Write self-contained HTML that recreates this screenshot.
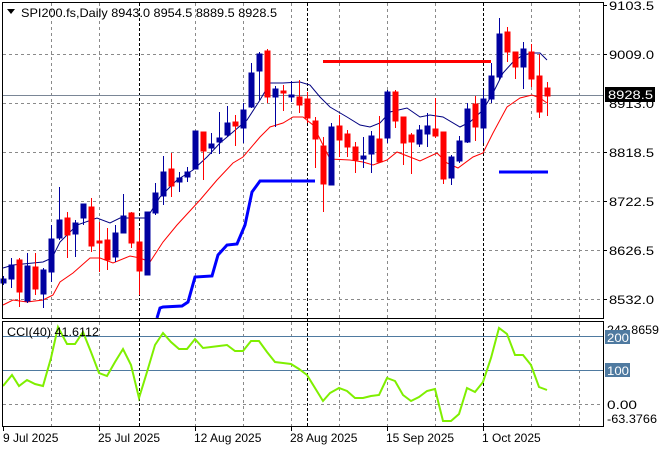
<!DOCTYPE html>
<html><head><meta charset="utf-8"><style>
html,body{margin:0;padding:0;background:#fff;}
svg{display:block;font-family:"Liberation Sans",sans-serif;}
</style></head><body>
<svg width="660" height="450" viewBox="0 0 660 450" xmlns="http://www.w3.org/2000/svg">
<rect width="660" height="450" fill="#fff"/>
<g stroke="#8a8a8a" stroke-width="1" stroke-dasharray="3,3">
<line x1="3" y1="54.5" x2="603" y2="54.5"/><line x1="3" y1="103.5" x2="603" y2="103.5"/><line x1="3" y1="152.5" x2="603" y2="152.5"/><line x1="3" y1="201.5" x2="603" y2="201.5"/><line x1="3" y1="250.5" x2="603" y2="250.5"/><line x1="3" y1="299.5" x2="603" y2="299.5"/>
<line x1="3" y1="404.5" x2="603" y2="404.5"/>
<line x1="51.5" y1="3" x2="51.5" y2="318"/><line x1="99.5" y1="3" x2="99.5" y2="318"/><line x1="195.5" y1="3" x2="195.5" y2="318"/><line x1="243.5" y1="3" x2="243.5" y2="318"/><line x1="291.5" y1="3" x2="291.5" y2="318"/><line x1="339.5" y1="3" x2="339.5" y2="318"/><line x1="387.5" y1="3" x2="387.5" y2="318"/><line x1="435.5" y1="3" x2="435.5" y2="318"/><line x1="531.5" y1="3" x2="531.5" y2="318"/><line x1="579.5" y1="3" x2="579.5" y2="318"/>
<line x1="51.5" y1="322" x2="51.5" y2="426"/><line x1="99.5" y1="322" x2="99.5" y2="426"/><line x1="195.5" y1="322" x2="195.5" y2="426"/><line x1="243.5" y1="322" x2="243.5" y2="426"/><line x1="291.5" y1="322" x2="291.5" y2="426"/><line x1="339.5" y1="322" x2="339.5" y2="426"/><line x1="387.5" y1="322" x2="387.5" y2="426"/><line x1="435.5" y1="322" x2="435.5" y2="426"/><line x1="531.5" y1="322" x2="531.5" y2="426"/><line x1="579.5" y1="322" x2="579.5" y2="426"/>
</g>
<g stroke="#000" stroke-width="1" stroke-dasharray="3,2">
<line x1="139.5" y1="3" x2="139.5" y2="426"/><line x1="307.5" y1="3" x2="307.5" y2="426"/><line x1="483.5" y1="3" x2="483.5" y2="426"/>
</g>
<line x1="3" y1="95.5" x2="603" y2="95.5" stroke="#7a8696" stroke-width="1"/>
<line x1="3" y1="336.5" x2="603" y2="336.5" stroke="#4f7aa0" stroke-width="1"/>
<line x1="3" y1="370.5" x2="603" y2="370.5" stroke="#4f7aa0" stroke-width="1"/>

<polyline fill="none" stroke="#ff0000" stroke-width="1" points="3,305 13,300 27,302 43,300 53,295 60,282 73,273 90,258 100,258 113,263 130,256 140,258 150,262 163,242 177,225 200,200 217,180 233,163 243,157 260,137 270,127 283,123 293,117 303,117 313,125 323,145 330,159 350,160 363,162 373,165 387,160 397,152 410,157 420,161 437,153 447,163 458,168 473,157 483,153 493,133 507,107 520,98 532,95 540,98 547,103"/>
<polyline fill="none" stroke="#000080" stroke-width="1" points="3,268 13,265 33,263 43,262 52,258 60,242 77,225 97,218 110,223 120,218 133,218 147,218 160,197 177,180 193,170 207,157 220,143 233,132 247,120 260,100 270,83 283,83 300,82 310,85 320,97 330,107 347,117 360,125 370,127 380,123 390,112 407,108 420,117 430,115 443,117 460,127 470,122 483,110 493,93 503,73 513,62 523,55 533,53 540,53 547,60"/>
<polyline fill="none" stroke="#0000ff" stroke-width="3" points="157,318 160,308 163,307 182,306 188,302 195,277 212,276 218,255 227,245 237,244 245,225 252,192 260,181 315,181"/>
<line x1="323" y1="61.5" x2="491" y2="61.5" stroke="#ff0000" stroke-width="3"/>
<line x1="499" y1="172" x2="548" y2="172" stroke="#0000ff" stroke-width="3"/>

<g>
<g stroke="#0000a0" fill="#0000a0">
<line x1="3.5" y1="276" x2="3.5" y2="285"/><rect x="1" y="279" width="5" height="4"/>
<line x1="11.5" y1="258" x2="11.5" y2="288"/><rect x="9" y="265" width="5" height="14"/>
<line x1="27.5" y1="253" x2="27.5" y2="303"/><rect x="25" y="266" width="5" height="35"/>
<line x1="43.5" y1="268" x2="43.5" y2="308"/><rect x="41" y="270" width="5" height="24"/>
<line x1="51.5" y1="225" x2="51.5" y2="282"/><rect x="49" y="239" width="5" height="33"/>
<line x1="59.5" y1="187" x2="59.5" y2="240"/><rect x="57" y="220" width="5" height="18"/>
<line x1="75.5" y1="220" x2="75.5" y2="257"/><rect x="73" y="223" width="5" height="11"/>
<line x1="83.5" y1="204" x2="83.5" y2="225"/><rect x="81" y="204" width="5" height="14"/>
<line x1="115.5" y1="225" x2="115.5" y2="262"/><rect x="113" y="233" width="5" height="24"/>
<line x1="123.5" y1="194" x2="123.5" y2="233"/><rect x="121" y="216" width="5" height="17"/>
<line x1="147.5" y1="212" x2="147.5" y2="275"/><rect x="145" y="212" width="5" height="63"/>
<line x1="155.5" y1="183" x2="155.5" y2="215"/><rect x="153" y="193" width="5" height="20"/>
<line x1="163.5" y1="156" x2="163.5" y2="205"/><rect x="161" y="172" width="5" height="24"/>
<line x1="179.5" y1="172" x2="179.5" y2="192"/><rect x="177" y="178" width="5" height="4"/>
<line x1="187.5" y1="167" x2="187.5" y2="182"/><rect x="185" y="172" width="5" height="5"/>
<line x1="195.5" y1="131" x2="195.5" y2="169"/><rect x="193" y="131" width="5" height="38"/>
<line x1="211.5" y1="133" x2="211.5" y2="154"/><rect x="209" y="144" width="5" height="4"/>
<line x1="219.5" y1="112" x2="219.5" y2="154"/><rect x="217" y="138" width="5" height="4"/>
<line x1="227.5" y1="106" x2="227.5" y2="137"/><rect x="225" y="123" width="5" height="12"/>
<line x1="243.5" y1="103" x2="243.5" y2="143"/><rect x="241" y="110" width="5" height="18"/>
<line x1="251.5" y1="63" x2="251.5" y2="108"/><rect x="249" y="73" width="5" height="34"/>
<line x1="259.5" y1="52" x2="259.5" y2="100"/><rect x="257" y="54" width="5" height="17"/>
<line x1="275.5" y1="86" x2="275.5" y2="127"/><rect x="273" y="89" width="5" height="8"/>
<line x1="291.5" y1="81" x2="291.5" y2="102"/><rect x="289" y="95" width="5" height="2"/>
<line x1="331.5" y1="123" x2="331.5" y2="185"/><rect x="329" y="127" width="5" height="58"/>
<line x1="363.5" y1="137" x2="363.5" y2="168"/><rect x="361" y="156" width="5" height="3"/>
<line x1="371.5" y1="131" x2="371.5" y2="173"/><rect x="369" y="136" width="5" height="18"/>
<line x1="387.5" y1="90" x2="387.5" y2="143"/><rect x="385" y="92" width="5" height="46"/>
<line x1="419.5" y1="125" x2="419.5" y2="147"/><rect x="417" y="130" width="5" height="14"/>
<line x1="427.5" y1="113" x2="427.5" y2="147"/><rect x="425" y="126" width="5" height="8"/>
<line x1="451.5" y1="155" x2="451.5" y2="185"/><rect x="449" y="157" width="5" height="21"/>
<line x1="459.5" y1="136" x2="459.5" y2="163"/><rect x="457" y="141" width="5" height="20"/>
<line x1="467.5" y1="103" x2="467.5" y2="143"/><rect x="465" y="109" width="5" height="33"/>
<line x1="483.5" y1="90" x2="483.5" y2="143"/><rect x="481" y="99" width="5" height="29"/>
<line x1="491.5" y1="63" x2="491.5" y2="103"/><rect x="489" y="76" width="5" height="23"/>
<line x1="499.5" y1="18" x2="499.5" y2="80"/><rect x="497" y="34" width="5" height="43"/>
<line x1="523.5" y1="42" x2="523.5" y2="89"/><rect x="521" y="49" width="5" height="18"/>
</g>
<g stroke="#ff0000" fill="#ff0000">
<line x1="19.5" y1="258" x2="19.5" y2="307"/><rect x="17" y="260" width="5" height="32"/>
<line x1="35.5" y1="253" x2="35.5" y2="295"/><rect x="33" y="267" width="5" height="22"/>
<line x1="67.5" y1="212" x2="67.5" y2="258"/><rect x="65" y="218" width="5" height="17"/>
<line x1="91.5" y1="198" x2="91.5" y2="252"/><rect x="89" y="207" width="5" height="39"/>
<line x1="99.5" y1="222" x2="99.5" y2="272"/><rect x="97" y="241" width="5" height="2"/>
<line x1="107.5" y1="228" x2="107.5" y2="270"/><rect x="105" y="240" width="5" height="20"/>
<line x1="131.5" y1="212" x2="131.5" y2="248"/><rect x="129" y="213" width="5" height="30"/>
<line x1="139.5" y1="230" x2="139.5" y2="295"/><rect x="137" y="242" width="5" height="29"/>
<line x1="171.5" y1="153" x2="171.5" y2="197"/><rect x="169" y="169" width="5" height="17"/>
<line x1="203.5" y1="132" x2="203.5" y2="180"/><rect x="201" y="132" width="5" height="19"/>
<line x1="235.5" y1="115" x2="235.5" y2="146"/><rect x="233" y="122" width="5" height="4"/>
<line x1="267.5" y1="49" x2="267.5" y2="103"/><rect x="265" y="51" width="5" height="46"/>
<line x1="283.5" y1="85" x2="283.5" y2="111"/><rect x="281" y="91" width="5" height="2"/>
<line x1="299.5" y1="80" x2="299.5" y2="113"/><rect x="297" y="97" width="5" height="8"/>
<line x1="307.5" y1="92" x2="307.5" y2="123"/><rect x="305" y="99" width="5" height="19"/>
<line x1="315.5" y1="117" x2="315.5" y2="168"/><rect x="313" y="121" width="5" height="18"/>
<line x1="323.5" y1="137" x2="323.5" y2="212"/><rect x="321" y="146" width="5" height="38"/>
<line x1="339.5" y1="115" x2="339.5" y2="157"/><rect x="337" y="126" width="5" height="14"/>
<line x1="347.5" y1="130" x2="347.5" y2="157"/><rect x="345" y="134" width="5" height="13"/>
<line x1="355.5" y1="142" x2="355.5" y2="173"/><rect x="353" y="147" width="5" height="13"/>
<line x1="379.5" y1="116" x2="379.5" y2="162"/><rect x="377" y="139" width="5" height="23"/>
<line x1="395.5" y1="90" x2="395.5" y2="128"/><rect x="393" y="92" width="5" height="29"/>
<line x1="403.5" y1="117" x2="403.5" y2="165"/><rect x="401" y="117" width="5" height="26"/>
<line x1="411.5" y1="133" x2="411.5" y2="174"/><rect x="409" y="135" width="5" height="7"/>
<line x1="435.5" y1="98" x2="435.5" y2="138"/><rect x="433" y="129" width="5" height="7"/>
<line x1="443.5" y1="132" x2="443.5" y2="184"/><rect x="441" y="132" width="5" height="47"/>
<line x1="475.5" y1="96" x2="475.5" y2="141"/><rect x="473" y="104" width="5" height="23"/>
<line x1="507.5" y1="27" x2="507.5" y2="62"/><rect x="505" y="32" width="5" height="20"/>
<line x1="515.5" y1="52" x2="515.5" y2="79"/><rect x="513" y="52" width="5" height="15"/>
<line x1="531.5" y1="44" x2="531.5" y2="87"/><rect x="529" y="52" width="5" height="27"/>
<line x1="539.5" y1="54" x2="539.5" y2="118"/><rect x="537" y="76" width="5" height="36"/>
<line x1="547.5" y1="82" x2="547.5" y2="116"/><rect x="545" y="88" width="5" height="8"/>
</g>
</g>

<polyline fill="none" stroke="#7fef00" stroke-width="2" points="3,386 12,375 19,386 27,380 35,384 43,386 51,358 58,327 67,344 75,344 83,332 91,352 99,373 107,376 115,362 123,349 131,365 139,398 147,372 155,345 163,333 171,342 179,349 187,349 195,339 203,348 211,347 219,346 227,345 235,351 243,351 251,341 259,341 267,352 275,362 283,363 291,364 299,369 307,375 315,388 323,401 330,393 339,388 347,391 355,398 363,398 371,396 379,395 387,378 395,381 403,395 411,401 419,397 427,391 435,389 443,421 451,421 459,414 467,388 475,392 483,382 491,358 499,328 507,334 515,355 523,355 531,365 539,387 547,390"/>

<rect x="2.5" y="2.5" width="601" height="316" fill="none" stroke="#000" stroke-width="1"/>
<rect x="2.5" y="321.5" width="601" height="105" fill="none" stroke="#000" stroke-width="1"/>

<polygon points="7,9 15,9 11,14" fill="#000"/>
<text x="21" y="17" font-size="12" fill="#000" textLength="256" lengthAdjust="spacingAndGlyphs">SPI200.fs,Daily  8943.0 8954.5 8889.5 8928.5</text>
<text x="7" y="336" font-size="12" fill="#000" textLength="92" lengthAdjust="spacingAndGlyphs">CCI(40) 41.6112</text>

<g font-size="12" fill="#000">
<line x1="603" y1="5.5" x2="607" y2="5.5" stroke="#000"/>
<text x="609" y="10" textLength="45" lengthAdjust="spacingAndGlyphs">9103.5</text>
<line x1="603" y1="54.5" x2="607" y2="54.5" stroke="#000"/>
<text x="609" y="59" textLength="45" lengthAdjust="spacingAndGlyphs">9009.0</text>
<text x="609" y="108" textLength="45" lengthAdjust="spacingAndGlyphs">8913.0</text>
<line x1="603" y1="152.5" x2="607" y2="152.5" stroke="#000"/>
<text x="609" y="157" textLength="45" lengthAdjust="spacingAndGlyphs">8818.5</text>
<line x1="603" y1="201.5" x2="607" y2="201.5" stroke="#000"/>
<text x="609" y="206" textLength="45" lengthAdjust="spacingAndGlyphs">8722.5</text>
<line x1="603" y1="250.5" x2="607" y2="250.5" stroke="#000"/>
<text x="609" y="255" textLength="45" lengthAdjust="spacingAndGlyphs">8626.5</text>
<line x1="603" y1="299.5" x2="607" y2="299.5" stroke="#000"/>
<text x="609" y="304" textLength="45" lengthAdjust="spacingAndGlyphs">8532.0</text>
</g>
<rect x="605" y="87" width="50" height="15" fill="#000"/>
<text x="608" y="99" font-size="12" fill="#fff" textLength="45" lengthAdjust="spacingAndGlyphs">8928.5</text>

<g font-size="12" fill="#000">
<text x="607" y="334" textLength="52" lengthAdjust="spacingAndGlyphs">243.8659</text>
<rect x="605" y="330" width="25" height="14" fill="#4f7aa0"/>
<text x="607" y="342" fill="#fff" textLength="22" lengthAdjust="spacingAndGlyphs">200</text>
<rect x="605" y="363" width="25" height="14" fill="#4f7aa0"/>
<text x="607" y="375" fill="#fff" textLength="22" lengthAdjust="spacingAndGlyphs">100</text>
<text x="607" y="409" textLength="30" lengthAdjust="spacingAndGlyphs">0.00</text>
<text x="607" y="423" textLength="50" lengthAdjust="spacingAndGlyphs">-63.3766</text>
</g>

<g stroke="#000"><line x1="3.5" y1="427" x2="3.5" y2="431"/><line x1="99.5" y1="427" x2="99.5" y2="431"/><line x1="195.5" y1="427" x2="195.5" y2="431"/><line x1="291.5" y1="427" x2="291.5" y2="431"/><line x1="387.5" y1="427" x2="387.5" y2="431"/><line x1="483.5" y1="427" x2="483.5" y2="431"/></g>
<g font-size="12" fill="#000">
<text x="3" y="442">9 Jul 2025</text>
<text x="98" y="442">25 Jul 2025</text>
<text x="194" y="442">12 Aug 2025</text>
<text x="290" y="442">28 Aug 2025</text>
<text x="386" y="442">15 Sep 2025</text>
<text x="482" y="442">1 Oct 2025</text>
</g>
</svg>
</body></html>
